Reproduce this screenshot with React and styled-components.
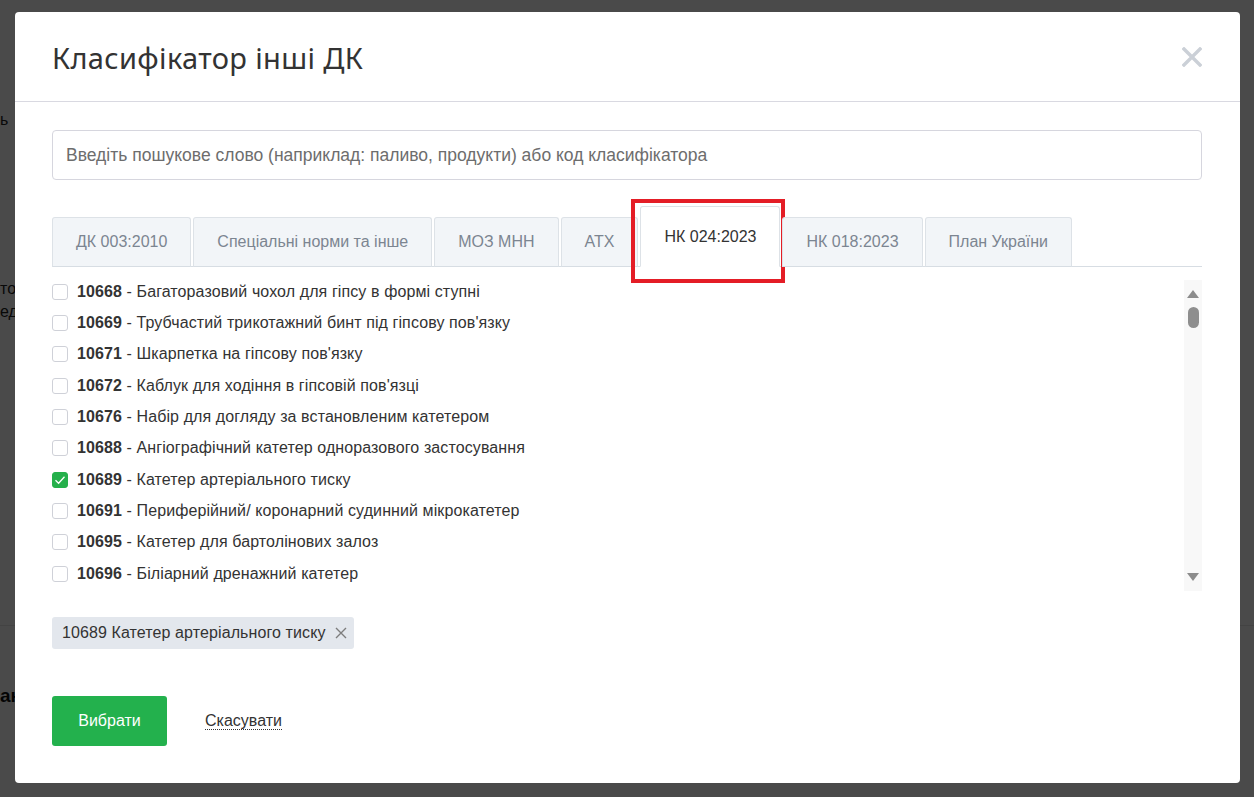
import React, { useState } from 'react';
import styled, { createGlobalStyle } from 'styled-components';

const GlobalStyle = createGlobalStyle`
  html, body { margin: 0; padding: 0; }
  body {
    background: #fff;
    font-family: "Liberation Sans", Arial, sans-serif;
    color: #333;
    overflow: hidden;
  }
`;

const tabs = [
  'ДК 003:2010',
  'Спеціальні норми та інше',
  'МОЗ МНН',
  'АТХ',
  'НК 024:2023',
  'НК 018:2023',
  'План України',
];

const items = [
  ['10668', 'Багаторазовий чохол для гіпсу в формі ступні'],
  ['10669', 'Трубчастий трикотажний бинт під гіпсову пов\'язку'],
  ['10671', 'Шкарпетка на гіпсову пов\'язку'],
  ['10672', 'Каблук для ходіння в гіпсовій пов\'язці'],
  ['10676', 'Набір для догляду за встановленим катетером'],
  ['10688', 'Ангіографічний катетер одноразового застосування'],
  ['10689', 'Катетер артеріального тиску'],
  ['10691', 'Периферійний/ коронарний судинний мікрокатетер'],
  ['10695', 'Катетер для бартолінових залоз'],
  ['10696', 'Біліарний дренажний катетер'],
];

function App() {
  const [activeTab, setActiveTab] = useState(4);
  const [checked, setChecked] = useState(['10689']);

  const toggle = (code) => {
    setChecked(checked.includes(code) ? checked.filter((c) => c !== code) : [...checked, code]);
  };

  return (
    <>
      <GlobalStyle />
      <Page>
        <PageText style={{ marginTop: 108 }}>ь</PageText>
        <PageText style={{ marginTop: 146 }}>то</PageText>
        <PageText>ед</PageText>
        <PageLine />
        <PageHeading>ан</PageHeading>
      </Page>
      <Overlay />
      <Modal>
        <Header>
          <Title>Класифікатор інші ДК</Title>
          <CloseButton aria-label="close">
            <svg width="20" height="20" viewBox="0 0 20 20">
              <path d="M2 2 L18 18 M18 2 L2 18" stroke="#cbd0d7" strokeWidth="3.4" strokeLinecap="square" />
            </svg>
          </CloseButton>
        </Header>
        <Body>
          <SearchInput placeholder="Введіть пошукове слово (наприклад: паливо, продукти) або код класифікатора" />
          <TabBar>
            {tabs.map((t, i) => (
              <Tab key={t} $active={i === activeTab} onClick={() => setActiveTab(i)}>
                {t}
                {i === 4 && <Highlight />}
              </Tab>
            ))}
          </TabBar>
          <ListArea>
            <List>
              {items.map(([code, name]) => (
                <Row key={code} onClick={() => toggle(code)}>
                  <Checkbox $checked={checked.includes(code)}>
                    {checked.includes(code) && (
                      <svg width="12" height="12" viewBox="0 0 12 12">
                        <path d="M1.5 6.2 L4.6 9.2 L10.5 2.8" fill="none" stroke="#fff" strokeWidth="1.3" />
                      </svg>
                    )}
                  </Checkbox>
                  <RowText><b>{code}</b> - {name}</RowText>
                </Row>
              ))}
            </List>
            <Scrollbar>
              <svg width="12" height="8" viewBox="0 0 12 8"><path d="M6 0 L12 8 L0 8 Z" fill="#8c8c8c" /></svg>
              <Thumb />
              <Spacer />
              <svg width="12" height="8" viewBox="0 0 12 8"><path d="M0 0 L12 0 L6 8 Z" fill="#8c8c8c" /></svg>
            </Scrollbar>
          </ListArea>
          <Chips>
            {items.filter(([code]) => checked.includes(code)).map(([code, name]) => (
              <Chip key={code}>
                {code} {name}
                <ChipRemove onClick={() => toggle(code)}>
                  <svg width="12" height="12" viewBox="0 0 12 12">
                    <path d="M1 1 L11 11 M11 1 L1 11" stroke="#7d7d7d" strokeWidth="1.4" />
                  </svg>
                </ChipRemove>
              </Chip>
            ))}
          </Chips>
          <Actions>
            <PrimaryButton>Вибрати</PrimaryButton>
            <CancelLink href="#">Скасувати</CancelLink>
          </Actions>
        </Body>
      </Modal>
    </>
  );
}

export default App;

const Page = styled.div`
  height: 797px;
  display: flex;
  flex-direction: column;
`;

const PageText = styled.div`
  font-size: 16px;
  line-height: 23px;
  color: #222;
`;

const PageLine = styled.div`
  margin-top: 302px;
  width: 100%;
  height: 1px;
  background: #e6e6e6;
`;

const PageHeading = styled.div`
  margin-top: 59px;
  font-size: 19px;
  font-weight: bold;
  color: #111;
`;

const Overlay = styled.div`
  position: fixed;
  inset: 0;
  background: rgba(0, 0, 0, 0.71);
`;

const Modal = styled.div`
  position: fixed;
  top: 12px;
  left: 15px;
  width: 1225px;
  height: 771px;
  background: #fff;
  border-radius: 4px;
  display: flex;
  flex-direction: column;
`;

const Header = styled.div`
  height: 91px;
  box-sizing: border-box;
  padding: 0 38px 0 37px;
  border-bottom: 1px solid #d9d9e1;
  display: flex;
  align-items: center;
  justify-content: space-between;
`;

const Title = styled.h2`
  margin: 0 0 -2px;
  font-family: "Noto Sans", sans-serif;
  font-weight: 400;
  font-size: 29px;
  color: #333;
  letter-spacing: 0.35px;
`;

const CloseButton = styled.button`
  border: none;
  background: none;
  padding: 0;
  width: 20px;
  height: 20px;
  cursor: pointer;
  display: flex;
`;

const Body = styled.div`
  padding: 28px 38px 37px 37px;
  display: flex;
  flex-direction: column;
  flex: 1;
`;

const SearchInput = styled.input`
  height: 50px;
  box-sizing: border-box;
  border: 1px solid #d6d6de;
  border-radius: 4px;
  padding: 0 13px;
  font-family: "Liberation Sans", Arial, sans-serif;
  font-size: 17.5px;
  color: #333;
  outline: none;
  &::placeholder { color: #6d6d6d; }
`;

const TabBar = styled.div`
  margin-top: 25px;
  height: 61px;
  display: flex;
  align-items: flex-end;
  gap: 2px;
  border-bottom: 1px solid #d7dde3;
`;

const Tab = styled.div`
  position: relative;
  box-sizing: border-box;
  height: ${(p) => (p.$active ? '61px' : '50px')};
  margin-bottom: -1px;
  padding: 0 23px;
  display: flex;
  align-items: center;
  justify-content: center;
  font-size: 16px;
  color: ${(p) => (p.$active ? '#333' : '#7c8591')};
  background: ${(p) => (p.$active ? '#fff' : '#f2f5f8')};
  border: 1px solid #dde2e7;
  border-bottom: ${(p) => (p.$active ? '1px solid #fff' : '1px solid #d7dde3')};
  border-radius: 3px 3px 0 0;
  cursor: pointer;
`;

const Highlight = styled.span`
  position: absolute;
  top: -8px;
  left: -10px;
  right: -6px;
  bottom: -17px;
  border: 4px solid #e41d26;
  pointer-events: none;
`;

const ListArea = styled.div`
  display: flex;
  height: 324px;
`;

const List = styled.div`
  flex: 1;
  padding-top: 9px;
  overflow: hidden;
`;

const Row = styled.label`
  height: 31.33px;
  display: flex;
  align-items: center;
  gap: 9px;
  cursor: pointer;
`;

const Checkbox = styled.span`
  width: 16px;
  height: 16px;
  box-sizing: border-box;
  border-radius: 3px;
  border: 1px solid ${(p) => (p.$checked ? '#25b04b' : '#cfd1d8')};
  background: ${(p) => (p.$checked ? '#25b04b' : '#fff')};
  display: flex;
  align-items: center;
  justify-content: center;
`;

const RowText = styled.span`
  font-size: 16px;
  letter-spacing: 0.1px;
  color: #333;
  b { color: #333; }
`;

const Scrollbar = styled.div`
  margin-top: 13px;
  width: 18px;
  background: #f8f8f8;
  display: flex;
  flex-direction: column;
  align-items: center;
  padding: 10px 0 10px;
  gap: 9px;
`;

const Thumb = styled.div`
  width: 11px;
  height: 21px;
  border-radius: 6px;
  background: #8e8e8e;
`;

const Spacer = styled.div`
  flex: 1;
`;

const Chips = styled.div`
  margin-top: 26px;
  display: flex;
  gap: 8px;
`;

const Chip = styled.div`
  height: 32px;
  display: flex;
  align-items: center;
  gap: 9px;
  padding: 0 7px 0 10px;
  background: #e3e7ed;
  border-radius: 3px;
  font-size: 16px;
  letter-spacing: 0.1px;
  color: #333;
`;

const ChipRemove = styled.span`
  display: flex;
  cursor: pointer;
`;

const Actions = styled.div`
  margin-top: 47px;
  display: flex;
  align-items: center;
  gap: 38px;
`;

const PrimaryButton = styled.button`
  width: 115px;
  height: 50px;
  border: none;
  border-radius: 3px;
  background: #23b14d;
  color: #fff;
  font-family: "Liberation Sans", Arial, sans-serif;
  font-size: 16px;
  cursor: pointer;
`;

const CancelLink = styled.a`
  font-size: 16px;
  color: #333;
  text-decoration: none;
  border-bottom: 1px dotted #333;
  line-height: 17px;
`;
